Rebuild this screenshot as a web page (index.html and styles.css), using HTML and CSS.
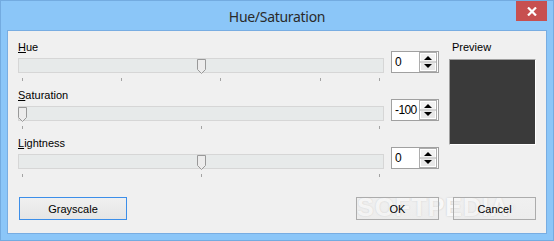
FILE: index.html
```html
<!DOCTYPE html>
<html lang="en">
<head>
    <meta charset="UTF-8">
    <title>Hue/Saturation</title>
    <link rel="stylesheet" href="styles.css">
</head>
<body>
    <div class="window">
        <div class="titlebar">
            <span class="title">Hue/Saturation</span>
            <span class="close">
                <svg width="10" height="9" viewBox="0 0 10 9"><path d="M1 0.5 L9 8.5 M9 0.5 L1 8.5" stroke="#fff" stroke-width="2.2"/></svg>
            </span>
        </div>
        <div class="client">
            <div class="watermark">SOFTPEDIA<sup>®</sup></div>
            <div class="main">
                <div class="controls">
                    <div class="group">
                        <div class="slider-col">
                            <div class="label"><u>H</u>ue</div>
                            <div class="track">
                                <span class="thumb" style="left: 178px"><svg width="9" height="15" viewBox="0 0 9 15"><polygon points="0.5,0.5 8.5,0.5 8.5,10.5 4.5,14.5 0.5,10.5" fill="#ececec" stroke="#999"/></svg></span>
                            </div>
                            <div class="ticks">
                                <i style="left: 4px"></i><i style="left: 103px"></i><i style="left: 202px"></i><i style="left: 302px"></i><i style="left: 361px"></i>
                            </div>
                        </div>
                        <div class="spin">
                            <span class="value">0</span>
                            <span class="arrows"><svg width="16" height="18" viewBox="0 0 16 18"><rect x="0" y="0" width="16" height="18" fill="#e4e4e4"/><rect x="0.5" y="0.5" width="15" height="8" fill="#f2f2f2" stroke="#fff"/><rect x="0.5" y="9.5" width="15" height="8" fill="#e8e8e8" stroke="#fff"/><line x1="0" y1="9" x2="16" y2="9" stroke="#a8a8a8"/><polygon points="4,7 12,7 8,3" fill="#000"/><polygon points="4,11 12,11 8,15" fill="#000"/></svg></span>
                        </div>
                    </div>
                    <div class="group">
                        <div class="slider-col">
                            <div class="label"><u>S</u>aturation</div>
                            <div class="track">
                                <span class="thumb" style="left: -1px"><svg width="9" height="15" viewBox="0 0 9 15"><polygon points="0.5,0.5 8.5,0.5 8.5,10.5 4.5,14.5 0.5,10.5" fill="#ececec" stroke="#999"/></svg></span>
                            </div>
                            <div class="ticks">
                                <i style="left: 4px"></i><i style="left: 183px"></i><i style="left: 361px"></i>
                            </div>
                        </div>
                        <div class="spin">
                            <span class="value">-100</span>
                            <span class="arrows"><svg width="16" height="18" viewBox="0 0 16 18"><rect x="0" y="0" width="16" height="18" fill="#e4e4e4"/><rect x="0.5" y="0.5" width="15" height="8" fill="#f2f2f2" stroke="#fff"/><rect x="0.5" y="9.5" width="15" height="8" fill="#e8e8e8" stroke="#fff"/><line x1="0" y1="9" x2="16" y2="9" stroke="#a8a8a8"/><polygon points="4,7 12,7 8,3" fill="#000"/><polygon points="4,11 12,11 8,15" fill="#000"/></svg></span>
                        </div>
                    </div>
                    <div class="group">
                        <div class="slider-col">
                            <div class="label"><u>L</u>ightness</div>
                            <div class="track">
                                <span class="thumb" style="left: 178px"><svg width="9" height="15" viewBox="0 0 9 15"><polygon points="0.5,0.5 8.5,0.5 8.5,10.5 4.5,14.5 0.5,10.5" fill="#ececec" stroke="#999"/></svg></span>
                            </div>
                            <div class="ticks">
                                <i style="left: 4px"></i><i style="left: 183px"></i><i style="left: 361px"></i>
                            </div>
                        </div>
                        <div class="spin">
                            <span class="value">0</span>
                            <span class="arrows"><svg width="16" height="18" viewBox="0 0 16 18"><rect x="0" y="0" width="16" height="18" fill="#e4e4e4"/><rect x="0.5" y="0.5" width="15" height="8" fill="#f2f2f2" stroke="#fff"/><rect x="0.5" y="9.5" width="15" height="8" fill="#e8e8e8" stroke="#fff"/><line x1="0" y1="9" x2="16" y2="9" stroke="#a8a8a8"/><polygon points="4,7 12,7 8,3" fill="#000"/><polygon points="4,11 12,11 8,15" fill="#000"/></svg></span>
                        </div>
                    </div>
                </div>
                <div class="preview">
                    <div class="label preview-label">Preview</div>
                    <div class="swatch"></div>
                </div>
            </div>
            <div class="buttons">
                <button class="btn btn-wide focused">Grayscale</button>
                <span class="spacer"></span>
                <button class="btn btn-clear">OK</button>
                <button class="btn btn-clear">Cancel</button>
            </div>
        </div>
    </div>
</body>
</html>
```

FILE: styles.css
```css
html, body {
    margin: 0;
    padding: 0;
}
body {
    width: 554px;
    height: 241px;
    overflow: hidden;
    font-family: "Liberation Sans", Arial, sans-serif;
    font-size: 11px;
    color: #000;
}
.window {
    box-sizing: border-box;
    width: 554px;
    height: 241px;
    background: #8bc6f8;
    border: 1px solid #73abe0;
    padding: 0 6px 6px;
    display: flex;
    flex-direction: column;
}
.titlebar {
    position: relative;
    height: 29px;
    display: flex;
    align-items: center;
    justify-content: center;
    flex-shrink: 0;
}
.title {
    font-family: "Noto Sans", "Open Sans", sans-serif;
    font-size: 14px;
    letter-spacing: -0.3px;
    color: #2a2a2a;
    margin-top: 2px;
}
.close {
    position: absolute;
    top: 0;
    right: 0;
    width: 31px;
    height: 20px;
    background: #c75050;
    display: flex;
    align-items: center;
    justify-content: center;
}
.client {
    position: relative;
    flex: 1;
    background: #f0f0f0;
    border: 1px solid #78ade2;
    padding: 10px 10px 13px 10px;
    display: flex;
    flex-direction: column;
    overflow: hidden;
}
.main {
    display: flex;
    gap: 10px;
}
.controls {
    display: flex;
    flex-direction: column;
    gap: 8px;
}
.group {
    display: flex;
    gap: 7px;
}
.slider-col {
    width: 366px;
}
.label {
    height: 13px;
    line-height: 13px;
}
.track {
    position: relative;
    box-sizing: border-box;
    height: 15px;
    margin-top: 4px;
    background: #e7eaea;
    border: 1px solid #d6d6d6;
}
.thumb {
    position: absolute;
    top: 0;
    width: 9px;
    height: 15px;
    line-height: 0;
}
.ticks {
    position: relative;
    height: 3px;
    margin-top: 5px;
}
.ticks i {
    position: absolute;
    top: 0;
    width: 1px;
    height: 3px;
    background: #a3a3a3;
}
.spin {
    box-sizing: border-box;
    width: 48px;
    height: 22px;
    margin-top: 10px;
    background: #fff;
    border: 1px solid #a0a0a0;
    display: flex;
    align-items: center;
    justify-content: space-between;
    padding: 0 1px 0 3px;
}
.value {
    font-size: 12px;
    letter-spacing: -0.6px;
}
.arrows {
    line-height: 0;
    border: 1px solid #adadad;
}
.preview-label {
    margin-left: 3px;
}
.swatch {
    box-sizing: border-box;
    width: 87px;
    height: 86px;
    margin-top: 5px;
    background: #3a3a3a;
    border: 1px solid;
    border-color: #a0a0a0 #ffffff #ffffff #a0a0a0;
}
.buttons {
    position: relative;
    z-index: 1;
    margin-top: auto;
    display: flex;
    gap: 14px;
}
.spacer {
    flex: 1;
}
.btn {
    box-sizing: border-box;
    width: 83px;
    height: 23px;
    font-family: "Liberation Sans", Arial, sans-serif;
    font-size: 11px;
    color: #000;
    background: linear-gradient(#f0f0f0, #e5e5e5);
    border: 1px solid #acacac;
    padding: 0;
}
.btn-clear {
    background: linear-gradient(rgba(240, 240, 240, 0.3), rgba(229, 229, 229, 0.3));
}
.btn-wide {
    width: 108px;
    margin-left: 1px;
}
.focused {
    border-color: #3c8ee9;
}
.watermark {
    position: absolute;
    left: 349px;
    top: 164px;
    font-family: "Liberation Sans", Arial, sans-serif;
    font-weight: bold;
    font-size: 25px;
    line-height: 25px;
    letter-spacing: 1px;
    color: rgba(255, 255, 255, 0.9);
    text-shadow: 0 0 2px rgba(0, 0, 0, 0.18);
    pointer-events: none;
}
.watermark sup {
    font-size: 8px;
    vertical-align: top;
}
```
